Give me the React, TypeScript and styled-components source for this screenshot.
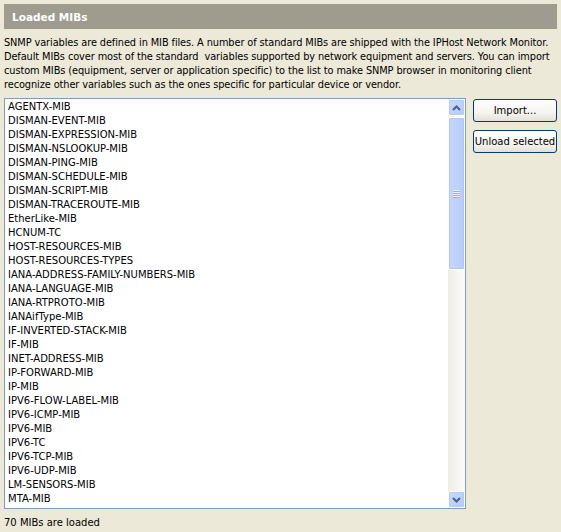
import React from 'react';
import styled, { createGlobalStyle } from 'styled-components';

// only the rows that fit in the list box are rendered
const mibs = [
  'AGENTX-MIB', 'DISMAN-EVENT-MIB', 'DISMAN-EXPRESSION-MIB', 'DISMAN-NSLOOKUP-MIB',
  'DISMAN-PING-MIB', 'DISMAN-SCHEDULE-MIB', 'DISMAN-SCRIPT-MIB', 'DISMAN-TRACEROUTE-MIB',
  'EtherLike-MIB', 'HCNUM-TC', 'HOST-RESOURCES-MIB', 'HOST-RESOURCES-TYPES',
  'IANA-ADDRESS-FAMILY-NUMBERS-MIB', 'IANA-LANGUAGE-MIB', 'IANA-RTPROTO-MIB', 'IANAifType-MIB',
  'IF-INVERTED-STACK-MIB', 'IF-MIB', 'INET-ADDRESS-MIB', 'IP-FORWARD-MIB', 'IP-MIB',
  'IPV6-FLOW-LABEL-MIB', 'IPV6-ICMP-MIB', 'IPV6-MIB', 'IPV6-TC', 'IPV6-TCP-MIB',
  'IPV6-UDP-MIB', 'LM-SENSORS-MIB', 'MTA-MIB',
];

const introLines = [
  'SNMP variables are defined in MIB files. A number of standard MIBs are shipped with the IPHost Network Monitor.',
  'Default MIBs cover most of the standard\u00a0 variables supported by network equipment and servers. You can import',
  'custom MIBs (equipment, server or application specific) to the list to make SNMP browser in monitoring client',
  'recognize other variables such as the ones specific for particular device or vendor.',
];

const GlobalStyle = createGlobalStyle`
  html, body {
    margin: 0;
    padding: 0;
    background: #ece9d8;
  }
  body {
    font-family: "DejaVu Sans", Verdana, sans-serif;
    font-size: 10px;
    color: #000;
  }
`;

const Page = styled.div`
  width: 561px;
  height: 532px;
  box-sizing: border-box;
  padding: 4px 4px 0 4px;
  display: flex;
  flex-direction: column;
  overflow: hidden;
`;

const Header = styled.div`
  height: 25px;
  background: #9d9c8f;
  color: #fff;
  font-weight: bold;
  font-size: 10.5px;
  display: flex;
  align-items: center;
  padding-left: 8px;
`;

const Intro = styled.div`
  margin-top: 7px;
  display: flex;
  flex-direction: column;
`;

const IntroLine = styled.span`
  height: 14px;
  line-height: 14px;
  white-space: nowrap;
  font-size: 9.8px;
  letter-spacing: -0.1px;
`;

const Body = styled.div`
  display: flex;
  gap: 7px;
  margin-top: 6px;
`;

const ListBox = styled.div`
  width: 462px;
  height: 411px;
  box-sizing: border-box;
  border: 1px solid #7f9db9;
  background: #fff;
  display: flex;
`;

const Items = styled.ul`
  flex: 1;
  margin: 0;
  padding: 1px 0 0 3px;
  list-style: none;
  overflow: hidden;
`;

const Item = styled.li`
  height: 14px;
  line-height: 14px;
  white-space: nowrap;
`;

const ScrollBar = styled.div`
  width: 17px;
  display: flex;
  flex-direction: column;
  background: linear-gradient(to right, #eeede5, #fcfcfa);
`;

const ArrowBtn = styled.div`
  width: 17px;
  height: 17px;
  box-sizing: border-box;
  border: 1px solid #fff;
  border-radius: 2px;
  background: linear-gradient(135deg, #c8d9fe, #b6cbf8);
  box-shadow: inset 0 0 0 1px #b5c9f3;
  display: flex;
  align-items: center;
  justify-content: center;
`;

const Thumb = styled.div`
  margin-top: 1px;
  height: 153px;
  box-sizing: border-box;
  border: 1px solid #fff;
  border-radius: 2px;
  background: linear-gradient(to right, #c6d7fd, #b8ccf9);
  box-shadow: inset 0 0 0 1px #b2c6f0;
  display: flex;
  align-items: center;
  justify-content: center;
`;

const Track = styled.div`
  flex: 1;
`;

const Buttons = styled.div`
  display: flex;
  flex-direction: column;
  gap: 8px;
  padding-top: 1px;
`;

const Button = styled.button`
  width: 84px;
  height: 23px;
  padding: 0;
  border: 1px solid #003c74;
  border-radius: 3px;
  background: linear-gradient(to bottom, #ffffff 0%, #f5f4ef 60%, #e3e1d6 100%);
  font-family: "DejaVu Sans", Verdana, sans-serif;
  font-size: 10px;
  color: #000;
`;

const Footer = styled.div`
  margin-top: 8px;
`;

const Arrow = ({ up }: { up?: boolean }) => (
  <svg width="9" height="6" viewBox="0 0 9 6">
    <path
      d={up ? 'M1 5 L4.5 1.5 L8 5' : 'M1 1 L4.5 4.5 L8 1'}
      stroke="#4d6185"
      strokeWidth="2"
      fill="none"
    />
  </svg>
);

const Grip = () => (
  <svg width="7" height="8" viewBox="0 0 7 8">
    {[0, 2, 4, 6].map(y => (
      <rect key={y} x="0" y={y} width="7" height="1" fill="#eef3fe" />
    ))}
    {[1, 3, 5, 7].map(y => (
      <rect key={y} x="0" y={y} width="7" height="1" fill="#8cb0f8" />
    ))}
  </svg>
);

const App = () => (
  <Page>
    <GlobalStyle />
    <Header>Loaded MIBs</Header>
    <Intro>
      {introLines.map(l => (
        <IntroLine key={l}>{l}</IntroLine>
      ))}
    </Intro>
    <Body>
      <ListBox>
        <Items>
          {mibs.map(m => (
            <Item key={m}>{m}</Item>
          ))}
        </Items>
        <ScrollBar>
          <ArrowBtn><Arrow up /></ArrowBtn>
          <Thumb><Grip /></Thumb>
          <Track />
          <ArrowBtn><Arrow /></ArrowBtn>
        </ScrollBar>
      </ListBox>
      <Buttons>
        <Button>Import...</Button>
        <Button>Unload selected</Button>
      </Buttons>
    </Body>
    <Footer>70 MIBs are loaded</Footer>
  </Page>
);

export default App;
